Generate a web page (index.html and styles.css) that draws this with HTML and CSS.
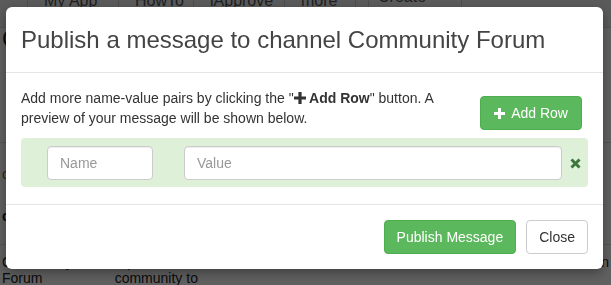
FILE: index.html
```html
<!DOCTYPE html>
<html lang="en">
<head>
    <meta charset="UTF-8">
    <meta name="viewport" content="width=device-width, initial-scale=1.0">
    <title>Publish Message</title>
    <link rel="stylesheet" href="styles.css">
</head>
<body>
    <div class="page">
        <div class="app-tabs">
            <span class="tab tab-first">My App</span>
            <span class="tab">HowTo</span>
            <span class="tab">iApprove</span>
            <span class="tab">more</span>
            <span class="tab tab-create">Create App</span>
        </div>

        <div class="channel-row row-tall">
            <div class="cell cell-big">Channels</div>
        </div>
        <div class="channel-row">
            <div class="cell">
                <div class="cell-link">community</div>
                <div class="cell-bold">channel</div>
            </div>
        </div>
        <div class="channel-row row-last">
            <div class="cell">Community<br>Forum</div>
            <div class="cell cell-desc">A place for the<br>community to</div>
            <div class="cell cell-join">Join</div>
        </div>
    </div>

    <div class="backdrop"></div>

    <div class="modal">
        <div class="modal-header">
            <h4 class="modal-title">Publish a message to channel Community Forum</h4>
        </div>

        <div class="modal-body">
            <div class="intro">
                <p class="intro-text">Add more name-value pairs by clicking the "<b><svg class="plus-icon" viewBox="0 0 12 12"><path d="M4.4 0h3.2v4.4H12v3.2H7.6V12H4.4V7.6H0V4.4h4.4z"/></svg> Add Row</b>" button. A preview of your message will be shown below.</p>
                <button class="btn btn-success btn-add">
                    <svg class="plus-icon" viewBox="0 0 12 12"><path d="M4.4 0h3.2v4.4H12v3.2H7.6V12H4.4V7.6H0V4.4h4.4z"/></svg>
                    Add Row
                </button>
            </div>

            <div class="pair-row">
                <input class="field field-name" type="text" placeholder="Name">
                <input class="field field-value" type="text" placeholder="Value">
                <span class="remove-btn">
                    <svg viewBox="0 0 12 12"><path d="M1.6 1.6L10.4 10.4M10.4 1.6L1.6 10.4"/></svg>
                </span>
            </div>
        </div>

        <div class="modal-footer">
            <button class="btn btn-success">Publish Message</button>
            <button class="btn btn-default">Close</button>
        </div>
    </div>
</body>
</html>
```

FILE: styles.css
```css
body {
    margin: 0;
    font-family: "Liberation Sans", Arial, sans-serif;
    font-size: 14px;
    color: #333;
    background-color: #fff;
    overflow: hidden;
}

/* page behind the dialog */
.page {
    height: 285px;
    overflow: hidden;
}

.app-tabs {
    display: flex;
    height: 40px;
    margin-top: -12px;
    padding-left: 27px;
    border-bottom: 1px solid #ddd;
    background-color: #eee;
    box-sizing: border-box;
}

.tab {
    padding: 4px 15px 0 16px;
    border-left: 1px solid #ccc;
    font-size: 16px;
    color: #555;
}

.tab-first {
    width: 59px;
}

.tab:nth-child(2) {
    width: 43px;
}

.tab:nth-child(3) {
    width: 59px;
}

.tab:nth-child(4) {
    width: 39px;
    border-right: 1px solid #ccc;
}

.tab-create {
    margin-left: 12px;
    padding: 0 9px;
    width: 74px;
    border: 1px solid #ccc;
    border-top: none;
    background-color: #f2f2f2;
}

.channel-row {
    display: flex;
    height: 102px;
    border-bottom: 1px solid #ddd;
    box-sizing: border-box;
}

.row-tall {
    height: 115px;
}

.row-last {
    height: 40px;
    border-bottom: none;
}

.cell {
    width: 109px;
    padding: 9px 2px 0;
    line-height: 16px;
    color: #222;
}

.cell-big {
    font-size: 24px;
    padding-top: 3px;
}

.cell-link {
    margin-top: 14px;
    color: #8a5a2b;
}

.cell-bold {
    margin-top: 26px;
    font-weight: bold;
}

.cell-desc {
    width: 444px;
}

.cell-join {
    width: auto;
    padding-left: 24px;
}

.backdrop {
    position: fixed;
    inset: 0;
    background-color: rgba(0, 0, 0, 0.62);
}

/* dialog */
.modal {
    position: absolute;
    left: 6px;
    top: 7px;
    width: 597px;
    background-color: #fff;
    border-radius: 6px;
    box-shadow: 0 4px 12px rgba(0, 0, 0, 0.35);
}

.modal-header {
    padding: 15px;
    border-bottom: 1px solid #e5e5e5;
}

.modal-title {
    margin: 0;
    font-size: 24px;
    font-weight: 300;
    line-height: 35px;
    color: #444;
}

.modal-body {
    padding: 15px 15px 17px;
}

.intro {
    display: flex;
    align-items: flex-start;
    height: 41px;
}

.intro-text {
    width: 440px;
    margin: 0;
    line-height: 20px;
}

.intro-text .plus-icon {
    width: 12px;
    height: 12px;
    fill: #333;
    vertical-align: -1px;
}

.btn {
    height: 34px;
    padding: 6px 12px;
    font-family: inherit;
    font-size: 14px;
    line-height: 20px;
    border: 1px solid transparent;
    border-radius: 4px;
    box-sizing: border-box;
}

.btn-success {
    background-color: #5cb85c;
    border-color: #4cae4c;
    color: #fff;
}

.btn-default {
    background-color: #fff;
    border-color: #ccc;
    color: #333;
}

.btn-add {
    width: 102px;
    margin: 8px 6px 0 auto;
}

.btn-add .plus-icon {
    width: 11px;
    height: 11px;
    fill: #fff;
    margin-right: 3px;
    vertical-align: -1px;
}

.pair-row {
    display: flex;
    align-items: center;
    margin-top: 9px;
    padding: 8px 0 7px 26px;
    background-color: #dff0d8;
    border-radius: 4px;
}

.field {
    height: 34px;
    padding: 6px 12px;
    font-family: inherit;
    font-size: 14px;
    color: #555;
    border: 1px solid #ccc;
    border-radius: 4px;
    box-sizing: border-box;
    box-shadow: inset 0 1px 1px rgba(0, 0, 0, 0.075);
}

.field::placeholder {
    color: #999;
}

.field-name {
    width: 106px;
}

.field-value {
    flex: 1;
    margin-left: 31px;
}

.remove-btn {
    display: flex;
    justify-content: center;
    width: 26px;
}

.remove-btn svg {
    width: 11px;
    height: 11px;
    stroke: #3c763d;
    stroke-width: 3.2;
}

.modal-footer {
    display: flex;
    justify-content: flex-end;
    gap: 10px;
    padding: 15px;
    border-top: 1px solid #e5e5e5;
}
```
